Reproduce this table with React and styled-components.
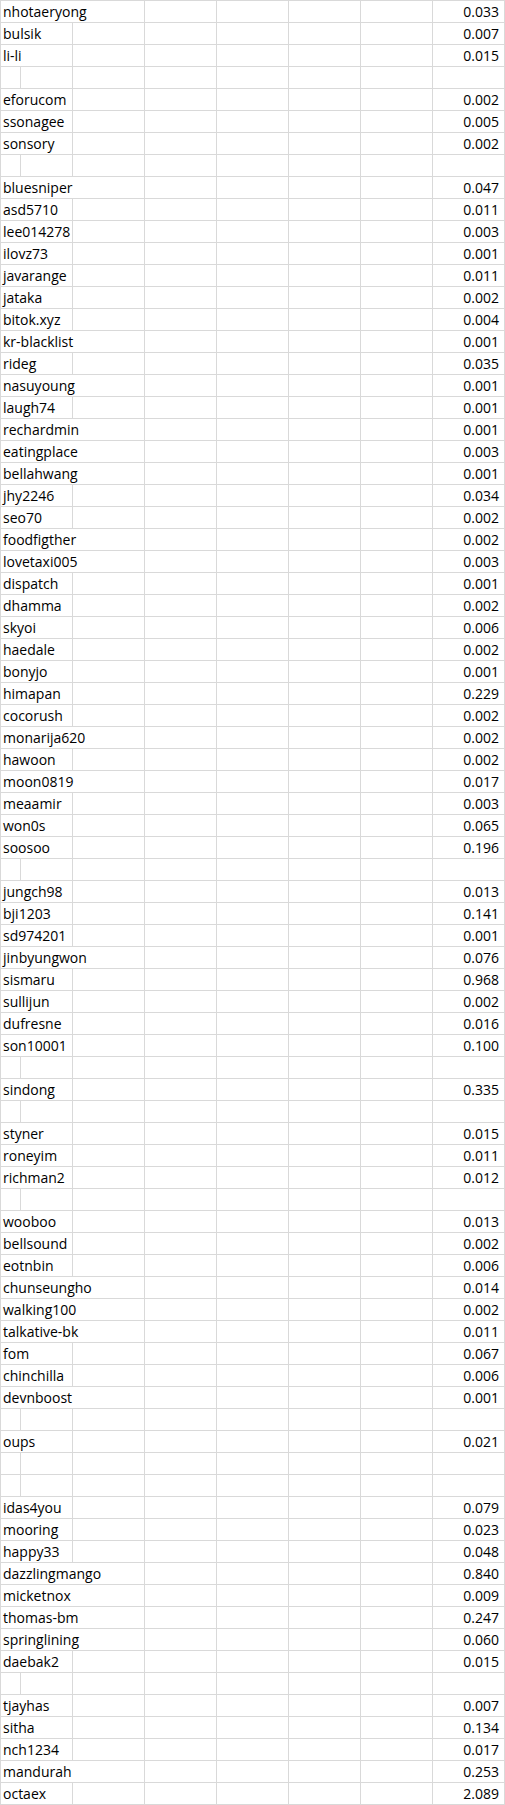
import React from "react";
import styled, { createGlobalStyle } from "styled-components";

const GlobalStyle = createGlobalStyle`
  html, body { margin: 0; padding: 0; background: #ffffff; }
  body { font-family: "Open Sans", "Noto Sans", sans-serif; }
`;

const rows = [
  ["nhotaeryong", "0.033", true],
  ["bulsik", "0.007"],
  ["li-li", "0.015"],
  null,
  ["eforucom", "0.002"],
  ["ssonagee", "0.005"],
  ["sonsory", "0.002"],
  null,
  ["bluesniper", "0.047", true],
  ["asd5710", "0.011"],
  ["lee014278", "0.003"],
  ["ilovz73", "0.001"],
  ["javarange", "0.011"],
  ["jataka", "0.002"],
  ["bitok.xyz", "0.004"],
  ["kr-blacklist", "0.001", true],
  ["rideg", "0.035"],
  ["nasuyoung", "0.001", true],
  ["laugh74", "0.001"],
  ["rechardmin", "0.001", true],
  ["eatingplace", "0.003", true],
  ["bellahwang", "0.001", true],
  ["jhy2246", "0.034"],
  ["seo70", "0.002"],
  ["foodfigther", "0.002", true],
  ["lovetaxi005", "0.003", true],
  ["dispatch", "0.001"],
  ["dhamma", "0.002"],
  ["skyoi", "0.006"],
  ["haedale", "0.002"],
  ["bonyjo", "0.001"],
  ["himapan", "0.229"],
  ["cocorush", "0.002"],
  ["monarija620", "0.002", true],
  ["hawoon", "0.002"],
  ["moon0819", "0.017", true],
  ["meaamir", "0.003"],
  ["won0s", "0.065"],
  ["soosoo", "0.196"],
  null,
  ["jungch98", "0.013"],
  ["bji1203", "0.141"],
  ["sd974201", "0.001"],
  ["jinbyungwon", "0.076", true],
  ["sismaru", "0.968"],
  ["sullijun", "0.002"],
  ["dufresne", "0.016"],
  ["son10001", "0.100"],
  null,
  ["sindong", "0.335"],
  null,
  ["styner", "0.015"],
  ["roneyim", "0.011"],
  ["richman2", "0.012"],
  null,
  ["wooboo", "0.013"],
  ["bellsound", "0.002"],
  ["eotnbin", "0.006"],
  ["chunseungho", "0.014", true],
  ["walking100", "0.002", true],
  ["talkative-bk", "0.011", true],
  ["fom", "0.067"],
  ["chinchilla", "0.006"],
  ["devnboost", "0.001", true],
  null,
  ["oups", "0.021"],
  null,
  null,
  ["idas4you", "0.079"],
  ["mooring", "0.023"],
  ["happy33", "0.048"],
  ["dazzlingmango", "0.840", true],
  ["micketnox", "0.009", true],
  ["thomas-bm", "0.247", true],
  ["springlining", "0.060", true],
  ["daebak2", "0.015"],
  null,
  ["tjayhas", "0.007"],
  ["sitha", "0.134"],
  ["nch1234", "0.017"],
  ["mandurah", "0.253", true],
  ["octaex", "2.089"],
];

const Sheet = styled.div`
  display: grid;
  grid-template-columns: 19px 51px repeat(6, 71px);
  grid-auto-rows: 21px;
  gap: 1px;
  padding: 1px;
  width: 505px;
  box-sizing: border-box;
  background: #d9d9d9;
  font-family: "Open Sans", "Noto Sans", sans-serif;
  font-size: 14px;
  line-height: 21px;
  color: #000000;
`;

const Cell = styled.div`
  background: #ffffff;
  white-space: nowrap;
  overflow: hidden;
  grid-column: span ${(p) => p.$span || 1};
`;

const NameCell = styled(Cell)`
  padding-left: 2px;
  text-align: left;
`;

const ValueCell = styled(Cell)`
  padding-right: 5px;
  text-align: right;
`;

function Row({ data }) {
  if (!data) {
    return Array.from({ length: 8 }, (_, i) => <Cell key={i} />);
  }
  const [name, value, wide] = data;
  const span = wide ? 3 : 2;
  const blanks = 8 - span - 1;
  return (
    <>
      <NameCell $span={span}>{name}</NameCell>
      {Array.from({ length: blanks }, (_, i) => (
        <Cell key={i} />
      ))}
      <ValueCell>{value}</ValueCell>
    </>
  );
}

export default function App() {
  return (
    <>
      <GlobalStyle />
      <Sheet>
        {rows.map((r, i) => (
          <Row key={i} data={r} />
        ))}
      </Sheet>
    </>
  );
}
